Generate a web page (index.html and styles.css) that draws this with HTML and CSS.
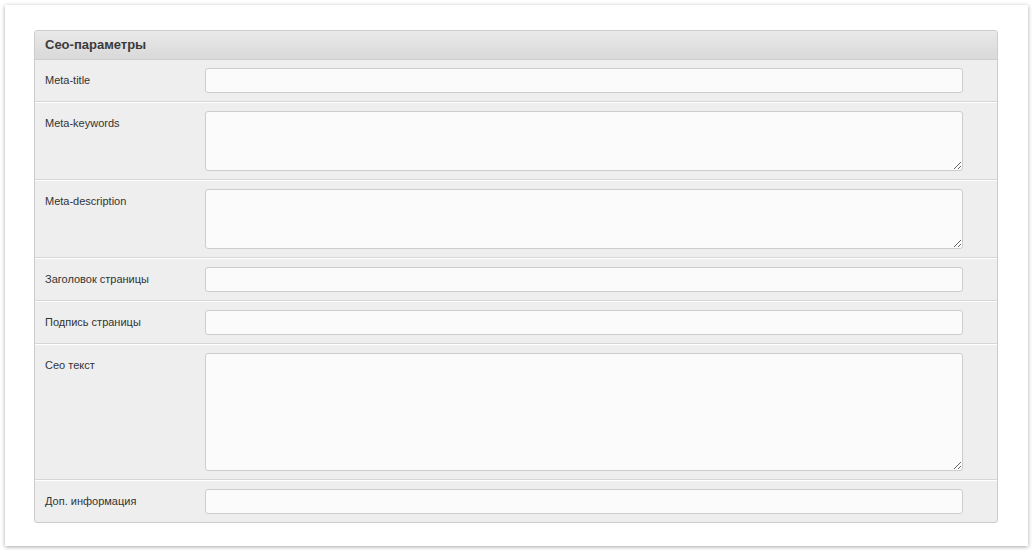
FILE: index.html
```html
<!DOCTYPE html>
<html lang="ru">
<head>
<meta charset="utf-8">
<title>Сео-параметры</title>
<link rel="stylesheet" href="styles.css">
</head>
<body>
<div class="card">
  <div class="panel">
    <div class="panel-head">Сео-параметры</div>
    <div class="row first">
      <label class="lbl">Meta-title</label>
      <input class="field" type="text">
    </div>
    <div class="row">
      <label class="lbl">Meta-keywords</label>
      <textarea class="field area"></textarea>
    </div>
    <div class="row">
      <label class="lbl">Meta-description</label>
      <textarea class="field area"></textarea>
    </div>
    <div class="row">
      <label class="lbl">Заголовок страницы</label>
      <input class="field" type="text">
    </div>
    <div class="row">
      <label class="lbl">Подпись страницы</label>
      <input class="field" type="text">
    </div>
    <div class="row">
      <label class="lbl">Сео текст</label>
      <textarea class="field area tall"></textarea>
    </div>
    <div class="row">
      <label class="lbl">Доп. информация</label>
      <input class="field" type="text">
    </div>
  </div>
</div>
</body>
</html>
```
FILE: styles.css
```css
html, body {
  margin: 0;
  padding: 0;
  background: #ffffff;
  font-family: "Liberation Sans", Arial, sans-serif;
  color: #333333;
}
body {
  padding: 5px;
}
.card {
  width: 1023px;
  height: 541px;
  box-sizing: border-box;
  background: #ffffff;
  box-shadow: 0 1px 4px rgba(0, 0, 0, 0.35);
  padding: 25px 31px 0 29px;
}
.panel {
  width: 964px;
  box-sizing: border-box;
  background: #eeeeee;
  border: 1px solid #cccccc;
  border-radius: 3px;
  overflow: hidden;
}
.panel-head {
  height: 28px;
  line-height: 28px;
  padding-left: 10px;
  font-size: 13px;
  font-weight: bold;
  color: #3a3a3a;
  background: linear-gradient(to bottom, #e9e9e9, #d9d9d9);
}
.row {
  display: grid;
  grid-template-columns: 160px 758px;
  padding: 9px 0 8px 10px;
  border-top: 1px solid #d6d6d6;
  box-shadow: inset 0 1px 0 #ffffff;
}
.row.first {
  padding-top: 8px;
  border-top-color: #cfcfcf;
  box-shadow: none;
}
.lbl {
  font-size: 11px;
  line-height: 15px;
  padding-top: 5px;
  color: #333333;
}
.field {
  display: block;
  width: 758px;
  height: 25px;
  box-sizing: border-box;
  margin: 0;
  border: 1px solid #cccccc;
  border-radius: 3px;
  background: #fbfbfb;
  font-family: inherit;
  font-size: 12px;
  outline: none;
}
.area {
  height: 60px;
  resize: vertical;
}
.area.tall {
  height: 118px;
}
```
